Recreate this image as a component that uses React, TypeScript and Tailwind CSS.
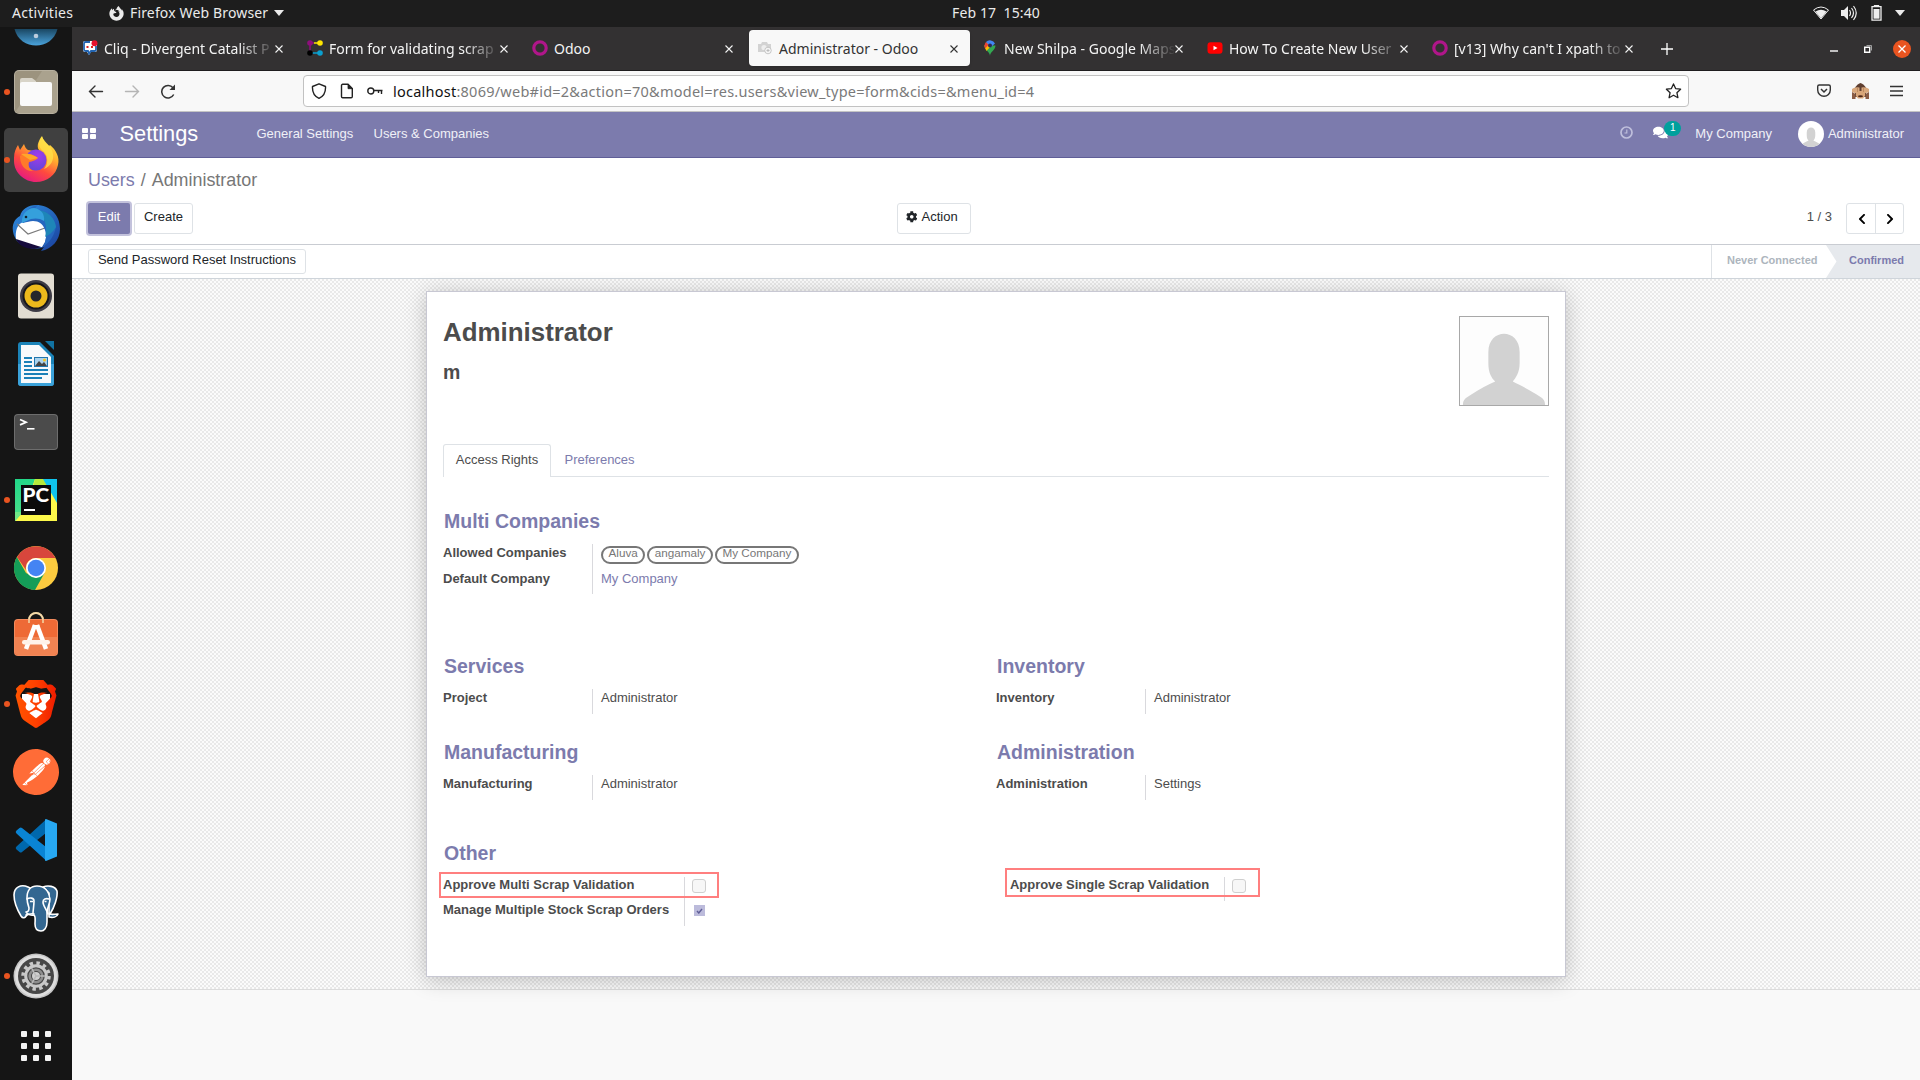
import React from "react";
import { FaFirefoxBrowser, FaCog, FaChevronLeft, FaChevronRight, FaComments } from "react-icons/fa";
import { SiBrave, SiPostman } from "react-icons/si";

const UI = "font-['Noto_Sans',sans-serif]";

/* ---------- dock icons ---------- */

function Files() {
  return (
    <svg width="48" height="48" viewBox="0 0 48 48">
      <rect x="2" y="2" width="44" height="44" rx="5" fill="#b8b1a0" />
      <rect x="3" y="3" width="42" height="42" rx="4" fill="#9c937e" />
      <path d="M30 3h11a4 4 0 0 1 4 4v34a4 4 0 0 1-4 4H7a4 4 0 0 1-3-2z" fill="#aaa28e" />
      <path d="M8 19v-7a2 2 0 0 1 2-2h10l4 3v6z" fill="#d8d4c8" />
      <rect x="8" y="14" width="32" height="24" rx="2" fill="#fafafa" />
    </svg>
  );
}

function Firefox() {
  return (
    <svg width="48" height="48" viewBox="0 0 48 48">
      <defs>
        <linearGradient id="ffBody" x1="0.8" y1="0" x2="0.25" y2="1">
          <stop offset="0" stopColor="#fff04a" />
          <stop offset="0.35" stopColor="#ffb02e" />
          <stop offset="0.65" stopColor="#ff4a3e" />
          <stop offset="1" stopColor="#e31587" />
        </linearGradient>
        <radialGradient id="ffGlobe" cx="0.6" cy="0.3" r="0.8">
          <stop offset="0" stopColor="#a13bea" />
          <stop offset="1" stopColor="#5b48d6" />
        </radialGradient>
      </defs>
      <path
        d="M2 22c0-6 2-10 4-13l2 5 4-6c1 3 2 5 4 6l6 1 5-1c-3-4 0-10 3-14 1 4 4 7 7 10l1-1c6 5 10 12 8 20-2 10-11 17-22 17S2 37 2 25z"
        fill="url(#ffBody)"
      />
      <path d="M30 1c-4 5-4 10 1 14 5 4 6 12 1 18 7-3 10-9 9-15C40 10 33 7 30 1z" fill="#ffe14a" opacity="0.75" />
      <circle cx="24" cy="24" r="10.500" fill="url(#ffGlobe)" />
      <path d="M8 20c6-4 13-2 18 2-3 3-5 3-9 4-1 3 0 8 5 9-9 1-14-6-14-15z" fill="#ff7a2a" />
      <path d="M9 18c5-1 12 0 17 4l-8 2z" fill="#ffa62a" />
    </svg>
  );
}

function Thunderbird() {
  return (
    <svg width="48" height="48" viewBox="0 0 48 48">
      <defs>
        <linearGradient id="tb" x1="0" y1="0" x2="1" y2="1">
          <stop offset="0" stopColor="#2f8fe0" />
          <stop offset="1" stopColor="#1a3f9c" />
        </linearGradient>
      </defs>
      <path d="M24 1c14 0 24 10 24 24 0 11-8 20-19 22l3-4c-10 4-22 0-27-6C-2 27 0 16 8 12 10 5 16 1 24 1z" fill="url(#tb)" />
      <path d="M4 35C3 28 5 19 12 18l14-3 10 9-3 14-3 5C20 43 10 40 4 35z" fill="#fff" />
      <path d="M5 20l11 10 17-6" fill="none" stroke="#7a7a7a" strokeWidth="1.100" />
      <path d="M4 35l25 8c-10 4-21 1-25-8z" fill="#160b3c" />
      <path d="M11 19c-1-9 6-17 15-18-2 2-3 3-3 4 12 1 20 9 21 18-2 9-6 15-13 20 3-5 4-11 2-17-2-6-6-9-12-9-3 0-6 1-10 2z" fill="#2567bf" />
      <path d="M26 6c10 1 17 8 18 17-3 5-7 8-11 10 3-9 0-19-7-27z" fill="#1e86b8" />
      <path d="M10 19c-1-8 5-15 12-15 7 1 11 6 10 13-4-3-9-3-13-2-3 1-6 3-9 4z" fill="#35a0dc" />
      <circle cx="14" cy="13" r="1.300" fill="#123" />
    </svg>
  );
}

function Rhythmbox() {
  return (
    <svg width="48" height="48" viewBox="0 0 48 48">
      <rect x="6" y="1.500" width="36" height="45" rx="3" fill="#e2ddd2" />
      <circle cx="24" cy="24" r="16" fill="#3d3b45" />
      <circle cx="24" cy="24" r="13.500" fill="#17171c" />
      <circle cx="24" cy="24" r="11.500" fill="#ecb91c" />
      <circle cx="24" cy="24" r="5.500" fill="#26262b" />
    </svg>
  );
}

function Writer() {
  return (
    <svg width="48" height="48" viewBox="0 0 48 48">
      <path d="M9 2h19l14 14v27a3 3 0 0 1-3 3H9a3 3 0 0 1-3-3V5a3 3 0 0 1 3-3z" fill="#1b83b8" />
      <path d="M6 24h36v19a3 3 0 0 1-3 3H9a3 3 0 0 1-3-3z" fill="#3ba2da" />
      <path d="M9 5h18l12 12v26H9z" fill="#f7f9fb" />
      <path d="M33 1h9v9z" fill="#1173a3" />
      <g fill="#1b80b8">
        <rect x="12" y="17" width="8" height="2" />
        <rect x="12" y="21" width="8" height="2" />
        <rect x="12" y="25" width="8" height="2" />
        <rect x="12" y="29" width="24" height="2" />
        <rect x="12" y="33" width="24" height="2" />
        <rect x="12" y="37" width="18" height="2" />
      </g>
      <rect x="22" y="17" width="14" height="10" fill="#2176ad" />
      <rect x="23" y="18" width="12" height="8" fill="#a9d3ee" />
      <path d="M23 26l4-5 3 3 2-2 3 4z" fill="#444" />
      <circle cx="32.500" cy="20" r="1.500" fill="#f5c421" />
    </svg>
  );
}

function Terminal() {
  return (
    <svg width="48" height="48" viewBox="0 0 48 48">
      <rect x="2" y="6" width="44" height="36" rx="4" fill="#6d6d6d" />
      <rect x="3" y="7" width="42" height="34" rx="3" fill="#4b4b4b" />
      <path d="M8 11.500l6 2.700-6 2.700" fill="none" stroke="#fff" strokeWidth="1.800" />
      <rect x="15" y="20" width="7.500" height="1.600" fill="#fff" />
    </svg>
  );
}

function PyCharm() {
  return (
    <svg width="48" height="48" viewBox="0 0 48 48">
      <defs>
        <linearGradient id="pc" x1="0" y1="0" x2="0.2" y2="1">
          <stop offset="0" stopColor="#21d789" />
          <stop offset="1" stopColor="#4ee08a" />
        </linearGradient>
      </defs>
      <rect x="3" y="3" width="42" height="42" fill="url(#pc)" />
      <path d="M23 3h12l10 22v20H3l8-9z" fill="#fcf84a" />
      <path d="M23 3h12l4 9-20 8z" fill="#b6ea3c" />
      <path d="M31 3h14v24z" fill="#10c4ee" />
      <path d="M3 45l8-9H3z" fill="#6fe887" />
      <rect x="9" y="9" width="30" height="30" fill="#0b0b0b" />
      <text x="10.500" y="25.500" fontFamily="Lato" fontWeight="900" fontSize="19" textLength="26.500" lengthAdjust="spacingAndGlyphs" fill="#fff">
        PC
      </text>
      <rect x="12" y="33" width="11" height="2" fill="#fff" />
    </svg>
  );
}

function Chrome() {
  return (
    <svg width="48" height="48" viewBox="0 0 48 48">
      <circle cx="24" cy="24" r="22" fill="#fccb3f" />
      <path d="M4.900 13A22 22 0 0 0 23 46l9.500-17L24 34l-10-5z" fill="#149d58" />
      <path d="M5 13A22 22 0 0 1 43.500 14H24a10 10 0 0 0-10 12z" fill="#d8463c" />
      <circle cx="24" cy="24" r="10" fill="#fff" />
      <circle cx="24" cy="24" r="8.300" fill="#4484f3" />
    </svg>
  );
}

function Software() {
  return (
    <svg width="48" height="48" viewBox="0 0 48 48" className="-mt-[5px]">
      <path d="M17 12V9a7 7 0 0 1 14 0v3" fill="none" stroke="#e9ce9a" strokeWidth="2" transform="translate(0,1)" />
      <rect x="2" y="9" width="44" height="37" rx="4" fill="#f28a5c" />
      <rect x="3" y="10" width="42" height="35" rx="3" fill="#ee6a36" />
      <path d="M3 27h42v15a3 3 0 0 1-3 3H6a3 3 0 0 1-3-3z" fill="#f18352" />
      <g stroke="#fff" strokeWidth="4.500">
        <line x1="23" y1="15" x2="14" y2="39" />
        <line x1="25" y1="15" x2="34" y2="39" />
      </g>
      <rect x="10" y="30" width="28" height="4.500" rx="2.200" fill="#fff3ea" />
      <rect x="20.800" y="15" width="6.500" height="4" fill="#fff" />
      <path d="M17 12V9a7 7 0 0 1 14 0v3" fill="none" stroke="#f3d9a8" strokeWidth="1.500" transform="translate(0,1)" />
    </svg>
  );
}

function Brave() {
  return (
    <svg width="48" height="48" viewBox="0 0 48 48">
      <defs>
        <linearGradient id="brave" x1="0" y1="0" x2="1" y2="0">
          <stop offset="0" stopColor="#ff5500" />
          <stop offset="0.5" stopColor="#ff4000" />
          <stop offset="1" stopColor="#ee1c00" />
        </linearGradient>
      </defs>
      <path d="M10 14h28v18l-14 9-14-9z" fill="#fff" />
      <SiBrave size={48} fill="url(#brave)" />
    </svg>
  );
}

function Postman() {
  return (
    <svg width="48" height="48" viewBox="0 0 48 48">
      <circle cx="24" cy="24" r="22" fill="#fff" />
      <SiPostman x="1" y="1" size={46} fill="#ff6c37" />
    </svg>
  );
}

function VsCode() {
  return (
    <svg width="48" height="48" viewBox="0 0 48 48">
      <path d="M34 3.500L4.500 30.500a2 2 0 0 0 0 3l3 2.500a2 2 0 0 0 2.500 0L34 17z" fill="#0068ad" />
      <path d="M34 44.500L4.500 17.500a2 2 0 0 1 0-3L7.500 12a2 2 0 0 1 2.500 0L34 31z" fill="#0a84d4" />
      <path d="M34 3l11 4.500v33L34 45l-1-.5V3.500z" fill="#27a8f2" />
    </svg>
  );
}

function Postgres() {
  return (
    <svg width="48" height="48" viewBox="0 0 48 48">
      <g fill="#336791" stroke="#fff" strokeWidth="1.600" strokeLinejoin="round" strokeLinecap="round">
        <path d="M31 3c5-2 12-1 14 4 1 6-3 17-7 23 2 1 5 0 8 0-1 3-5 4-9 3V9z" />
        <path d="M16 3C9 0 2 3 2 11c0 7 4 16 7 21 2 3 4 2 6-1l3-4V4z" />
        <path d="M15 14c0-8 4-12 10-12 8 0 12 6 13 13 0 5-3 9-3 13v10c0 6-3 9-6 9-4 0-6-3-6-7 0-4 1-7-1-9-3 1-7-1-8-3 2 0 3-1 3-4-1-3-2-6-2-10z" />
        <path d="M15 15c3-2 7-1 7 2 0 5-1 9-1 13M37 15c-3-1-6 0-6 3 0 4 4 8 5 12" fill="none" />
        <path d="M14 31c4-1 6-2 8-1" fill="none" />
      </g>
      <path d="M18 17.500h3M32.500 17.500h2" stroke="#fff" strokeWidth="1.500" />
    </svg>
  );
}

function Gear() {
  return (
    <svg width="48" height="48" viewBox="0 0 48 48">
      <circle cx="24" cy="24" r="22.500" fill="#c4c4c4" />
      <circle cx="24" cy="24" r="21" fill="#dedede" />
      <circle cx="24" cy="24" r="18" fill="#474747" />
      <circle cx="24" cy="24" r="13" fill="none" stroke="#c9c9c9" strokeWidth="3.500" strokeDasharray="3.4 3.407" />
      <circle cx="24" cy="24" r="10.300" fill="none" stroke="#c9c9c9" strokeWidth="3" />
      <circle cx="24" cy="24" r="6.300" fill="none" stroke="#8d8d8d" strokeWidth="2.600" />
      <circle cx="24" cy="24" r="4" fill="#cfcfcf" />
      <g stroke="#b9b9b9" strokeWidth="1.500">
        <line x1="24" y1="24" x2="33" y2="24" />
        <line x1="24" y1="24" x2="19.500" y2="16" />
        <line x1="24" y1="24" x2="19.500" y2="32" />
      </g>
    </svg>
  );
}

const dock: { Icon: () => React.JSX.Element; running?: boolean; active?: boolean }[] = [
  { Icon: Files, running: true },
  { Icon: Firefox, running: true, active: true },
  { Icon: Thunderbird },
  { Icon: Rhythmbox },
  { Icon: Writer },
  { Icon: Terminal },
  { Icon: PyCharm, running: true },
  { Icon: Chrome },
  { Icon: Software },
  { Icon: Brave, running: true },
  { Icon: Postman },
  { Icon: VsCode },
  { Icon: Postgres },
  { Icon: Gear, running: true },
];

function Dock() {
  return (
    <aside className="flex w-[72px] shrink-0 flex-col overflow-hidden bg-[#151515]">
      <div className="flex h-[31px] justify-center overflow-hidden">
        <svg width="48" height="20" viewBox="0 0 48 20">
          <defs>
            <linearGradient id="blueDisc" x1="0" y1="0" x2="0" y2="1">
              <stop offset="0" stopColor="#1a4763" />
              <stop offset="1" stopColor="#4aa3dc" />
            </linearGradient>
          </defs>
          <path d="M2.500 2C8 24 40 24 45.500 2z" fill="url(#blueDisc)" />
          <circle cx="24" cy="9" r="2.300" fill="#bcd" />
        </svg>
      </div>
      {dock.map(({ Icon, running, active }, i) => (
        <div key={i} className="relative flex h-[68px] w-[72px] items-center justify-center">
          <div className={active ? "flex size-16 items-center justify-center rounded-[5px] bg-[#404040]" : "flex size-16 items-center justify-center"}>
            <Icon />
          </div>
          {running && <span className="absolute left-[4px] top-[31px] size-[6px] rounded-full bg-[#e95420]" />}
        </div>
      ))}
      <div className="flex h-[70px] items-center justify-center">
        <div className="mt-[2px] grid grid-cols-3 gap-[6px]">
          {Array.from({ length: 9 }, (_, i) => (
            <span key={i} className="size-[6px] rounded-[1px] bg-[#f4f4f4]" />
          ))}
        </div>
      </div>
    </aside>
  );
}

/* ---------- desktop bar ---------- */

function TopBar() {
  return (
    <header className={`grid h-[27px] shrink-0 grid-cols-[1fr_auto_1fr] items-center bg-[#1d1d1d] pb-px text-[14px] leading-[26px] text-[#ebebeb] ${UI}`}>
      <div className="flex items-center pl-[12px]">
        <span className="w-[97px] tracking-[0.3px]">Activities</span>
        <FaFirefoxBrowser className="mr-[6px] size-[15px]" />
        <span className="w-[144px] whitespace-nowrap tracking-[0.15px]">Firefox Web Browser</span>
        <svg width="10" height="6"><path d="M0 0h10L5 6z" fill="#ebebeb" /></svg>
      </div>
      <span className="pl-[72px] tracking-[0.1px] whitespace-pre">Feb 17  15:40</span>
      <div className="flex items-center justify-end pr-[15px]">
        <svg width="16" height="14" viewBox="0 0 16 14" className="mr-[12px]">
          <path d="M.5 4Q8-2 15.500 4L8 13z" fill="none" stroke="#eee" strokeWidth="1" />
          <path d="M2.500 5.500Q8 2 13.500 5.500L8 12.500z" fill="#eee" />
        </svg>
        <svg width="16" height="16" viewBox="0 0 16 16" className="mr-[14px]">
          <path d="M0 5h3l4-4v14l-4-4H0z" fill="#eee" />
          <path d="M8.500 5q2 3 0 6M10.500 3q4 5 0 10M12.500 1q5.500 7 0 14" fill="none" stroke="#eee" strokeWidth="1.200" />
        </svg>
        <svg width="11" height="16" viewBox="0 0 11 16" className="mr-[13px]">
          <path d="M3.500 1.700V.5h4v1.200M1 1.700h9v13.500H1z" fill="none" stroke="#eee" strokeWidth="1.300" />
          <path d="M2.500 4h6v9.700h-6z" fill="#eee" />
        </svg>
        <svg width="10" height="6"><path d="M0 0h10L5 6z" fill="#ebebeb" /></svg>
      </div>
    </header>
  );
}

/* ---------- browser chrome ---------- */

function CliqIcon() {
  return (
    <svg width="16" height="16" viewBox="0 0 16 16">
      <path d="M1 3a2 2 0 0 1 2-2h9a3 3 0 0 1 3 3v6a2 2 0 0 1-2 2H9l-2 3-2-3H3a2 2 0 0 1-2-2z" fill="#fff" />
      <path d="M8 2H3.500A1.500 1.500 0 0 0 2 3.500v6A1.500 1.500 0 0 0 3.500 11H6l1 2.500L9 11h3.500A1.500 1.500 0 0 0 14 9.500V6" fill="none" stroke="#2364b0" strokeWidth="1.800" />
      <circle cx="12.500" cy="3.300" r="3" fill="#e8112d" />
      <path d="M4.500 6h2v2h-2zM9 6h2v2H9z" fill="#d22" />
    </svg>
  );
}
function NodesIcon() {
  return (
    <svg width="16" height="16" viewBox="0 0 16 16">
      <path d="M3 3v10M3 3h4" stroke="#8e0e7c" strokeWidth="1.500" fill="none" />
      <path d="M7 3h6" stroke="#ffe600" strokeWidth="1.500" />
      <path d="M3 13h10" stroke="#0aa0d0" strokeWidth="1.500" />
      <circle cx="3" cy="3" r="2.800" fill="#8e0e7c" />
      <circle cx="13" cy="3" r="2.800" fill="#ffe600" />
      <circle cx="3" cy="13" r="2.800" fill="#000" />
      <circle cx="13" cy="13" r="2.800" fill="#0aa0d0" />
    </svg>
  );
}
function RingIcon() {
  return (
    <svg width="16" height="16" viewBox="0 0 16 16">
      <circle cx="8" cy="8" r="6.200" fill="none" stroke="#b0168a" strokeWidth="3.200" />
    </svg>
  );
}
function CameraIcon() {
  return (
    <svg width="16" height="16" viewBox="0 0 16 16">
      <path d="M1 4h3l1-2h5l1 2h3v8H1z" fill="#d3d3d3" />
      <circle cx="7" cy="7.500" r="2.600" fill="#eee" />
      <circle cx="11" cy="10.500" r="3.300" fill="#f5f5f5" stroke="#bbb" strokeWidth="0.800" />
      <path d="M9.500 10.500h3M11 9v3" stroke="#bbb" strokeWidth="1" />
    </svg>
  );
}
function MapsIcon() {
  return (
    <svg width="16" height="16" viewBox="0 0 16 16">
      <path d="M8 16C8 12 2.500 10 2.500 5.500L8 5.500l5.500 0C13.500 10 8 12 8 16z" fill="#34a853" />
      <path d="M2.500 5.500L5 2l4 4-4.500 5Q2.500 8 2.500 5.500z" fill="#fbbc04" />
      <path d="M2.500 6Q2.500 3.500 4 2l3 2.500-4 4z" fill="#ea4335" />
      <path d="M4 2a5.600 5.600 0 0 1 9 1.500L9 7z" fill="#4285f4" />
      <circle cx="8" cy="5.500" r="2" fill="#2b2a50" />
    </svg>
  );
}
function YoutubeIcon() {
  return (
    <svg width="16" height="16" viewBox="0 0 16 16">
      <rect x="0.500" y="2.300" width="15" height="11.400" rx="3" fill="#f00" />
      <path d="M6.500 5.700v4.600l4-2.300z" fill="#fff" />
    </svg>
  );
}

const tabs = [
  { icon: <CliqIcon />, title: "Cliq - Divergent Catalist P", fade: true },
  { icon: <NodesIcon />, title: "Form for validating scrap", fade: true },
  { icon: <RingIcon />, title: "Odoo" },
  { icon: <CameraIcon />, title: "Administrator - Odoo", active: true },
  { icon: <MapsIcon />, title: "New Shilpa - Google Maps", fade: true },
  { icon: <YoutubeIcon />, title: "How To Create New User", fade: true },
  { icon: <RingIcon />, title: "[v13] Why can't I xpath to", fade: true },
];

function Tab({ icon, title, fade, active }: { icon: React.ReactNode; title: string; fade?: boolean; active?: boolean }) {
  return (
    <div className={active ? "flex h-9 w-[221px] items-center rounded bg-[#f8f8f8] pl-2 text-[#333] shadow" : "flex h-9 w-[221px] items-center pl-2 text-[#f4f4f4]"}>
      {icon}
      <span className={fade ? "ml-[6px] w-[170px] pt-[2px] whitespace-nowrap [mask-image:linear-gradient(to_right,#000_135px,transparent_172px)]" : "ml-[6px] w-[170px] pt-[2px] whitespace-nowrap"}>
        {title}
      </span>
      <svg width="8" height="8" viewBox="0 0 8 8" className="mt-px ml-px"><path d="M.5.5l7 7m0-7l-7 7" stroke="currentColor" strokeWidth="1.100" /></svg>
    </div>
  );
}

function TabBar() {
  return (
    <div className={`flex h-[44px] items-center gap-1 border-b border-[#1f1d1f] bg-[#333132] pb-px pl-[2px] text-[14px] leading-5 ${UI}`}>
      {tabs.map((t) => (
        <Tab key={t.title} {...t} />
      ))}
      <svg width="12" height="12" viewBox="0 0 12 12" className="mt-[2px] ml-[12px]"><path d="M6 0v12M0 6h12" stroke="#fff" strokeWidth="1.300" /></svg>
      <div className="ml-auto flex items-center pt-[2px] pr-[9px]">
        <svg width="8" height="8" className="mr-[26px]"><path d="M0 6h8" stroke="#fff" strokeWidth="1.400" /></svg>
        <svg width="8" height="8" viewBox="0 0 8 8" className="mr-[21px]">
          <path d="M.7 2.200h5v5h-5z" fill="none" stroke="#fff" strokeWidth="1.400" />
          <path d="M2.500.5h5v5" fill="none" stroke="#aaa" strokeWidth="0.900" />
        </svg>
        <span className="flex size-[18px] items-center justify-center rounded-full bg-[#e95420]">
          <svg width="8" height="8" viewBox="0 0 8 8"><path d="M.5.5l7 7m0-7l-7 7" stroke="#fff" strokeWidth="1.300" /></svg>
        </span>
      </div>
    </div>
  );
}

function Toolbar() {
  return (
    <div className={`flex h-[41px] items-center border-b border-[#c4c4c4] bg-[#f8f8f8] pl-[16px] text-[#333] ${UI}`}>
      <svg width="16" height="16" viewBox="0 0 16 16" className="mr-[20px]"><path d="M14.500 8.500h-13M7 3L1.500 8.500 7 14" fill="none" stroke="#333" strokeWidth="1.400" strokeLinecap="round" /></svg>
      <svg width="16" height="16" viewBox="0 0 16 16" className="mr-[20px]"><path d="M1.500 8.500h13M9 3l5.500 5.500L9 14" fill="none" stroke="#b5b5b5" strokeWidth="1.400" strokeLinecap="round" /></svg>
      <svg width="16" height="16" viewBox="0 0 16 16">
        <path d="M13.700 11.500A6.300 6.300 0 1 1 13 4.800l1 1.200" fill="none" stroke="#333" strokeWidth="1.500" />
        <path d="M15 1.500V7H9.500z" fill="#333" />
      </svg>
      <div className="ml-[127px] flex h-8 w-[1386px] items-center rounded border border-[#c2c2c2] bg-white pl-[7px] pr-[6px]">
        <svg width="16" height="16" viewBox="0 0 16 16" className="mr-[12px]"><path d="M8 .8l6.500 2.700c.3 5-1.500 9.500-6.500 11.800C3 13 1.200 8.500 1.500 3.500z" fill="none" stroke="#222" strokeWidth="1.400" strokeLinejoin="round" /></svg>
        <svg width="16" height="16" viewBox="0 0 16 16" className="mr-[12px]">
          <path d="M2.500 2.500a1.200 1.200 0 0 1 1.200-1.200H9l4.300 4.300v8a1.200 1.200 0 0 1-1.200 1.200H3.700a1.200 1.200 0 0 1-1.200-1.200z" fill="none" stroke="#222" strokeWidth="1.400" />
          <path d="M9 1.500v4.200h4.300z" fill="#222" stroke="#222" strokeWidth="0.800" />
        </svg>
        <svg width="16" height="16" viewBox="0 0 16 16" className="mr-[10px]">
          <circle cx="3.800" cy="8" r="3" fill="none" stroke="#222" strokeWidth="1.400" />
          <path d="M6.800 7.500H15.500M11.500 7.500v2.500M14.500 7.500v3.500" fill="none" stroke="#222" strokeWidth="1.400" />
        </svg>
        <span className="text-[14.5px] leading-5 tracking-[0.24px] whitespace-nowrap text-[#7a7a7a]">
          <span className="text-[#111]">localhost</span>:8069/web#id=2&amp;action=70&amp;model=res.users&amp;view_type=form&amp;cids=&amp;menu_id=4
        </span>
        <svg width="17" height="16" viewBox="0 0 16 16" className="ml-auto"><path d="M8 .9l2.100 4.700 5 .6-3.700 3.500 1 5L8 12.200l-4.400 2.500 1-5L.9 6.200l5-.6z" fill="none" stroke="#222" strokeWidth="1.300" strokeLinejoin="round" /></svg>
      </div>
      <div className="ml-auto flex items-center pr-[17px]">
        <svg width="14" height="14" viewBox="0 0 14 14" className="mr-[21px]">
          <path d="M.7 2.500A1.500 1.500 0 0 1 2.200 1h9.600a1.500 1.500 0 0 1 1.500 1.500V6A6.300 6.300 0 0 1 .7 6z" fill="none" stroke="#333" strokeWidth="1.400" />
          <path d="M4 5l3 3 3-3" fill="none" stroke="#333" strokeWidth="1.500" />
        </svg>
        <svg width="17" height="17" viewBox="0 0 17 17" className="mr-[21px]">
          <path d="M3 5q2-4 5.500-5Q12 1 14 5v9H3z" fill="#5f3f30" />
          <path d="M4 8h9v5l-2 2.500H6L4 13z" fill="#d9a679" />
          <path d="M0 9V6q3-2.500 7.500-1.500v4q-3 3-6 1zM17 9V6q-3-2.500-7.500-1.500v4q3 3 6 1z" fill="#d9a87c" />
          <path d="M0 9l3.500 2v5H0zM17 9l-3.500 2v5H17z" fill="#8a5c45" />
          <path d="M5.500 5v4M11.500 5v4" stroke="#a8764e" strokeWidth="0.600" />
          <ellipse cx="8.500" cy="13.300" rx="2.500" ry="1" fill="#4c2618" />
        </svg>
        <svg width="13" height="12" viewBox="0 0 13 12"><path d="M0 1.500h13M0 6h13M0 10.500h13" stroke="#333" strokeWidth="1.400" /></svg>
      </div>
    </div>
  );
}

/* ---------- application ---------- */

function Silhouette({ size }: { size: number }) {
  return (
    <svg width={size} height={size} viewBox="0 0 90 90">
      <path d="M29 36C29 11 61 11 61 36v11C61 57 57 62 54 66c6 3 16 8 24 13 7 4 9 6 9 11H3c0-5 2-7 9-11 8-5 17-10 24-13-4-4-7-9-7-19z" fill="#d2d2d2" />
    </svg>
  );
}

function Navbar() {
  return (
    <nav className="flex h-[46px] items-center border-b border-[#5f5e97] bg-[#7c7bad] pr-4 pb-[2px] pl-[10px] text-[13px] leading-5 text-white">
      <div className="grid grid-cols-2 gap-[1.500px]">
        {[0, 1, 2, 3].map((i) => (
          <span key={i} className="h-[5px] w-[6px] rounded-[1px] bg-white" />
        ))}
      </div>
      <span className="ml-[24px] w-[137px] text-[21.8px] leading-8">Settings</span>
      <span className="w-[117px] text-[#f0f0f7]">General Settings</span>
      <span className="text-[#f0f0f7]">Users &amp; Companies</span>
      <div className="ml-auto flex items-center">
        <svg width="13" height="13" viewBox="0 0 13 13" className="mr-[20px] mt-[-2px]">
          <circle cx="6.500" cy="6.500" r="5.500" fill="none" stroke="#bfbfdc" strokeWidth="1.700" />
          <path d="M6.800 3.500v3.500H4.500" fill="none" stroke="#bfbfdc" strokeWidth="1.200" />
        </svg>
        <div className="relative mr-[27px] mt-[-2px] size-[15px]">
          <FaComments className="size-[15px]" />
          <span className="absolute -top-[4px] left-[11px] flex h-[15px] w-[17px] items-center justify-center rounded-full bg-[#00a09d] pb-px text-[10px]">1</span>
        </div>
        <span className="mr-[26px] text-[#f0f0f7]">My Company</span>
        <span className="mr-[4px] flex size-[26px] items-end justify-center overflow-hidden rounded-full bg-white">
          <Silhouette size={24} />
        </span>
        <span className="tracking-[-0.04px] text-[#f0f0f7]">Administrator</span>
      </div>
    </nav>
  );
}

function ControlPanel() {
  return (
    <section className="flex h-[87px] flex-col border-b border-[#c9ccd2] bg-white px-4 pt-[10px] text-[13px] text-[#212529]">
      <div className="h-[34px] text-[17.9px] leading-6 whitespace-pre text-[#777]">
        <span className="text-[#7c7bad]">Users</span>
        <span className="mx-[6px]">/</span>
        <span>Administrator</span>
      </div>
      <div className="mt-px grid grid-cols-[809px_1fr_auto] items-start leading-5">
        <div className="flex gap-[4px]">
          <span className="h-[31px] w-[42px] rounded-[2px] bg-[#7c7bad] pt-[4px] text-center text-white shadow-[0_0_0_2px_#c3c2dc]">Edit</span>
          <span className="h-[31px] w-[59px] rounded-[3px] border border-[#dee2e6] pt-[3px] text-center">Create</span>
        </div>
        <span className="flex h-[31px] w-[74px] items-start rounded-[3px] border border-[#dee2e6] pt-[3px] pl-[8px]">
          <FaCog className="mt-[4px] mr-[4px] size-[11.500px]" />
          Action
        </span>
        <div className="flex">
          <span className="mr-[14px] pt-[4px] text-[#4c4c4c]">1 / 3</span>
          <div className="flex h-[31px] w-[58px] rounded-[3px] border border-[#dee2e6] text-black">
            <span className="flex flex-1 items-center justify-center border-r border-[#dee2e6] pl-px"><FaChevronLeft className="size-[12px]" /></span>
            <span className="flex flex-1 items-center justify-center"><FaChevronRight className="size-[12px]" /></span>
          </div>
        </div>
      </div>
    </section>
  );
}

function StatusBar() {
  return (
    <section className="flex h-[34px] justify-between border-b border-[#ced4da] bg-white pl-4">
      <span className="mt-[4px] h-[25px] w-[218px] rounded-[3px] border border-[#dee2e6] text-center text-[13px] leading-[20px] tracking-[-0.02px] text-[#212529]">
        Send Password Reset Instructions
      </span>
      <div className="flex text-[11px] leading-[31px] font-bold">
        <span className="w-[115px] border-l border-[#dee2e6] pl-[15px] text-[#adb5bd]">Never Connected</span>
        <svg width="11" height="33" viewBox="0 0 11 33" className="bg-[#e6e9ed]"><path d="M0 0l10.500 16.500L0 33z" fill="#fff" /></svg>
        <span className="w-[83px] bg-[#e6e9ed] pl-[12px] text-[#7c7bad]">Confirmed</span>
      </div>
    </section>
  );
}

function Heading({ children }: { children: React.ReactNode }) {
  return <h3 className="h-[29px] pl-px text-[19.500px] leading-6 font-bold text-[#7c7bad]">{children}</h3>;
}

function Field({ label, children }: { label: string; children: React.ReactNode }) {
  return (
    <div className="flex h-[25px] leading-[18px]">
      <span className="w-[149px] font-bold">{label}</span>
      <span className="border-l border-[#d9d9dd] pl-[8px]">{children}</span>
    </div>
  );
}

function Tag({ children }: { children: React.ReactNode }) {
  return (
    <span className="mt-[2px] h-[18px] overflow-hidden rounded-full border-2 border-[#777] px-[5.500px] text-[11.700px] leading-[10px] text-[#777]">
      {children}
    </span>
  );
}

function EmptyCheck() {
  return <span className="block size-[14px] rounded-[3px] border border-[#cfcfcf] bg-[#f7f7f7]" />;
}

function Sheet() {
  return (
    <article className="relative mx-auto h-[686px] w-[1140px] border border-[#c8c8d3] bg-white px-4 pt-[24px] text-[13px] text-[#4c4c4c] shadow-[0_3px_20px_rgba(0,0,0,0.22)]">
      <div className="flex h-[128px] justify-between">
        <div>
          <h1 className="h-[44px] text-[25.900px] leading-8 font-bold">Administrator</h1>
          <h2 className="text-[19.500px] leading-6 font-bold">m</h2>
        </div>
        <div className="flex size-[90px] items-end justify-center border border-[#a8a8a8] bg-[#fdfdfd]">
          <Silhouette size={88} />
        </div>
      </div>

      <div className="flex h-[33px] border-b border-[#dee2e6] leading-5">
        <span className="h-[33px] w-[108px] rounded-t-[3px] border border-b-0 border-[#dee2e6] bg-white pt-[5px] text-center">Access Rights</span>
        <span className="pt-[6px] pl-[13.500px] text-[#7c7bad]">Preferences</span>
      </div>

      <div className="mt-[32px]">
        <Heading>Multi Companies</Heading>
        <div className="mt-[6px] flex h-[25px] leading-[18px]">
          <span className="w-[149px] font-bold">Allowed Companies</span>
          <div className="flex gap-[2px] border-l border-[#d9d9dd] pl-[8px]">
            <Tag>Aluva</Tag>
            <Tag>angamaly</Tag>
            <Tag>My Company</Tag>
          </div>
        </div>
        <div className="flex h-[25px] leading-5">
          <span className="w-[149px] font-bold">Default Company</span>
          <span className="border-l border-[#d9d9dd] pl-[8px] text-[#7c7bad]">My Company</span>
        </div>
      </div>

      <div className="mt-[60px] grid grid-cols-[553px_1fr]">
        <div className="h-[86px]">
          <Heading>Services</Heading>
          <div className="mt-[6px]"><Field label="Project">Administrator</Field></div>
        </div>
        <div className="h-[86px]">
          <Heading>Inventory</Heading>
          <div className="mt-[6px]"><Field label="Inventory">Administrator</Field></div>
        </div>
        <div className="h-[101px]">
          <Heading>Manufacturing</Heading>
          <div className="mt-[6px]"><Field label="Manufacturing">Administrator</Field></div>
        </div>
        <div className="h-[101px]">
          <Heading>Administration</Heading>
          <div className="mt-[6px]"><Field label="Administration">Settings</Field></div>
        </div>
      </div>

      <Heading>Other</Heading>
      <div className="mt-[7px] grid grid-cols-[567px_1fr] leading-4">
        <div className="relative flex">
          <div className="w-[241px] font-bold whitespace-nowrap">
            <div className="h-[25px]">Approve Multi Scrap Validation</div>
            <div className="h-[25px]">Manage Multiple Stock Scrap Orders</div>
          </div>
          <div className="h-[49px] border-l border-[#d9d9dd] pt-[2px] pl-[7px]">
            <EmptyCheck />
            <span className="mt-[12px] ml-[2px] flex size-[11px] items-center justify-center bg-[#bcbbdb]">
              <svg width="7" height="6" viewBox="0 0 7 6"><path d="M1 3l1.800 2L6 1" fill="none" stroke="#5f5e97" strokeWidth="1.400" /></svg>
            </span>
          </div>
          <span className="absolute -top-[5px] -left-[4px] h-[26px] w-[280px] border-2 border-[#ff7f7f]" />
        </div>
        <div className="relative flex h-[24px]">
          <span className="w-[214px] tracking-[-0.03px] font-bold">Approve Single Scrap Validation</span>
          <div className="border-l border-[#d9d9dd] pt-[2px] pl-[7px]"><EmptyCheck /></div>
          <span className="absolute -top-[9px] -left-[5px] h-[29px] w-[255px] border-2 border-[#ff7f7f]" />
        </div>
      </div>
    </article>
  );
}

export default function App() {
  return (
    <div className="flex h-[1080px] w-[1920px] flex-col overflow-hidden bg-[#f9f9f9] font-['Liberation_Sans',sans-serif]">
      <TopBar />
      <div className="flex min-h-0 flex-1">
        <Dock />
        <main className="flex w-[1848px] flex-col">
          <TabBar />
          <Toolbar />
          <Navbar />
          <ControlPanel />
          <StatusBar />
          <div className="h-[711px] border-b border-[#dcdcdc] bg-[repeating-conic-gradient(#e9e9e9_0_25%,#fbfbfb_0_50%)] bg-[length:4px_4px] pt-[12px]">
            <Sheet />
          </div>
        </main>
      </div>
    </div>
  );
}
